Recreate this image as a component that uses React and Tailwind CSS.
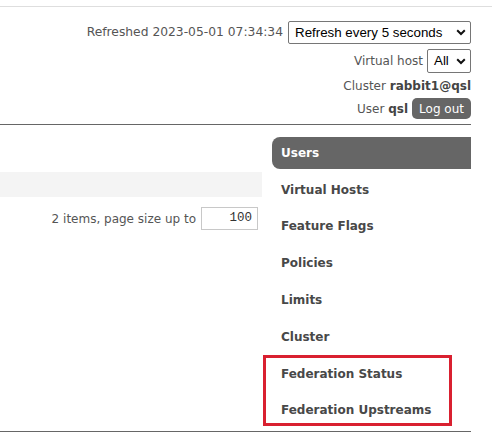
import { useState } from "react";

const navItems = [
  "Users",
  "Virtual Hosts",
  "Feature Flags",
  "Policies",
  "Limits",
  "Cluster",
  "Federation Status",
  "Federation Upstreams",
];

function Chevron() {
  return (
    <svg width="10" height="7" viewBox="0 0 10 7" className="shrink-0">
      <path d="M1.2 1.3 L5 5 L8.8 1.3" fill="none" stroke="#111" strokeWidth="2" />
    </svg>
  );
}

function FakeSelect({ value, className }) {
  return (
    <div
      className={`flex items-center justify-between border border-[#767676] rounded-[2px] bg-white pl-[6px] pr-[4px] font-['Liberation_Sans',sans-serif] text-[13.33px] text-black ${className}`}
    >
      <span>{value}</span>
      <Chevron />
    </div>
  );
}

export default function App() {
  const [active] = useState("Users");

  return (
    <div className="relative w-[492px] h-[438px] overflow-hidden bg-white font-['DejaVu_Sans',Verdana,sans-serif] text-[12px] text-[#555]">
      <div className="h-[7px] border-b border-[#dedede]" />

      <div className="w-[471px]">
        {/* header */}
        <div className="flex flex-col items-end pt-[14px] pb-[5px] border-b border-[#666]">
          <div className="flex items-center gap-[5px] h-[23px]">
            <span className="text-[12.3px]">Refreshed 2023-05-01 07:34:34</span>
            <FakeSelect value="Refresh every 5 seconds" className="w-[183px] h-[23px]" />
          </div>
          <div className="flex items-center gap-[4px] h-[24px] mt-[5px]">
            <span>Virtual host</span>
            <FakeSelect value="All" className="w-[44px] h-[24px]" />
          </div>
          <div className="flex items-center h-[21px] mt-[2px]">
            <span>
              Cluster <b className="text-[#444]">rabbit1@qsl</b>
            </span>
          </div>
          <div className="flex items-center gap-[4px] h-[21px] mt-[2px]">
            <span>
              User <b className="text-[#444]">qsl</b>
            </span>
            <button className="h-[21px] px-[7px] rounded-[5px] bg-[#666] text-white">
              Log out
            </button>
          </div>
        </div>

        {/* main */}
        <div className="flex gap-[10px] pt-[12px] border-b border-[#666]">
          <div className="w-[262px] pt-[35px]">
            <div className="h-[25px] bg-[#f4f4f4]" />
            <div className="flex items-center justify-end gap-[5px] mt-[10px] pr-[4px]">
              <span>2 items, page size up to</span>
              <div className="w-[57px] h-[23px] border border-[#c8c8c8] flex items-center justify-end pr-[5px] font-['Liberation_Mono',monospace] text-[12.5px] text-[#333]">
                100
              </div>
            </div>
          </div>

          <ul className="w-[199px] flex flex-col">
            {navItems.map((item) => (
              <li
                key={item}
                className={`h-[31.8px] mb-[5px] flex items-center pl-[9px] font-bold ${
                  item === active
                    ? "bg-[#666] text-white rounded-l-[8px]"
                    : "text-[#484848]"
                }`}
              >
                {item}
              </li>
            ))}
          </ul>
        </div>
      </div>

      {/* highlight annotation */}
      <div className="absolute left-[263px] top-[355px] w-[189px] h-[71px] border-[3px] border-[#d92030]" />
    </div>
  );
}
